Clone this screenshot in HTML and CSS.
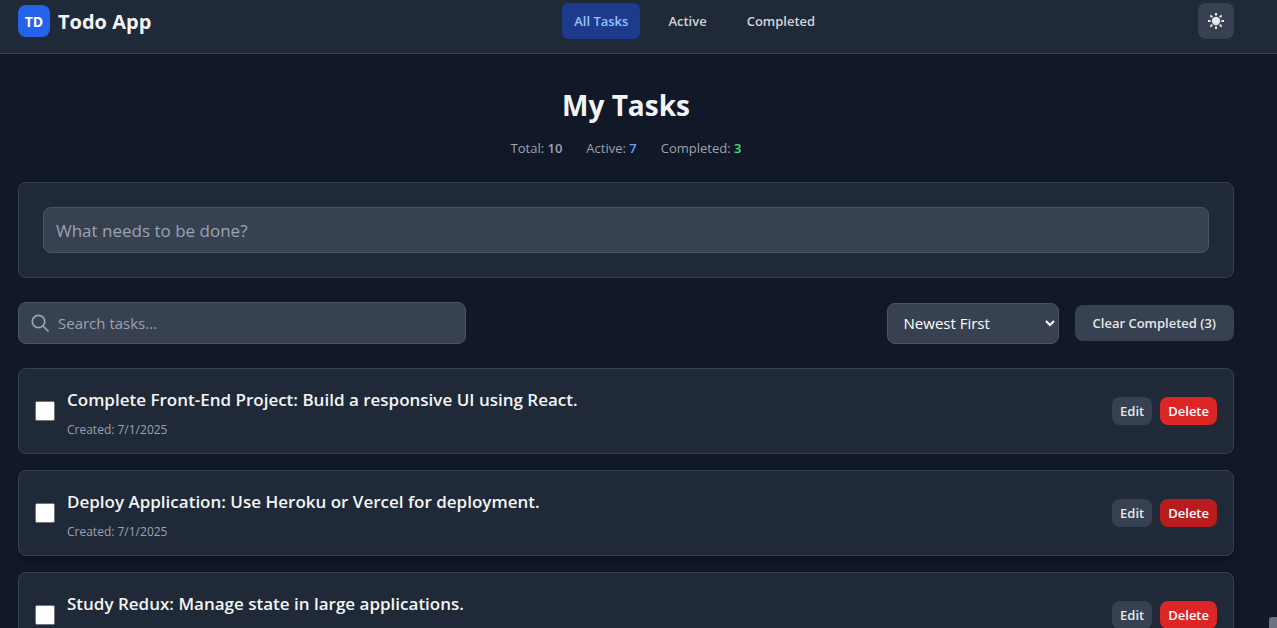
FILE: index.html
```html
<!DOCTYPE html>
<html lang="en">
<head>
<meta charset="utf-8">
<meta name="viewport" content="width=device-width, initial-scale=1">
<title>Todo App</title>
<link rel="stylesheet" href="styles.css">
</head>
<body>
<header class="topbar">
  <div class="brand">
    <span class="brand-mark">TD</span>
    <span class="brand-name">Todo App</span>
  </div>
  <nav class="nav">
    <a class="nav-link active" href="#all">All Tasks</a>
    <a class="nav-link" href="#active">Active</a>
    <a class="nav-link" href="#completed">Completed</a>
  </nav>
  <button class="theme-toggle" type="button" aria-label="Toggle theme">
    <svg width="16" height="16" viewBox="0 0 16 16" fill="currentColor" aria-hidden="true">
      <circle cx="8" cy="8" r="4.200"/>
      <g stroke="currentColor" stroke-width="2">
        <path d="M8 0v2.600M8 13.400V16M0 8h2.600M13.400 8H16"/>
        <path d="M2.400 2.400l1.800 1.800M11.800 11.800l1.800 1.800M2.400 13.600l1.800-1.800M11.800 4.200l1.800-1.800"/>
      </g>
    </svg>
  </button>
</header>

<main class="page">
  <section class="intro">
    <h1 class="title">My Tasks</h1>
    <div class="stats">
      <span>Total: <b>10</b></span>
      <span>Active: <b class="blue">7</b></span>
      <span>Completed: <b class="green">3</b></span>
    </div>
  </section>

  <form class="card composer">
    <input class="field new-task" type="text" placeholder="What needs to be done?" aria-label="New task">
  </form>

  <div class="toolbar">
    <label class="field search">
      <svg width="20" height="20" viewBox="0 0 20 20" fill="none" stroke="currentColor" stroke-width="1.700" stroke-linecap="round" aria-hidden="true">
        <circle cx="8.500" cy="8.500" r="6.200"/>
        <path d="M13 13l5 5"/>
      </svg>
      <input class="search-input" type="text" placeholder="Search tasks..." aria-label="Search tasks">
    </label>
    <div class="toolbar-actions">
      <select class="field sort" aria-label="Sort tasks">
        <option>Newest First</option>
        <option>Oldest First</option>
      </select>
      <button class="button clear" type="button">Clear Completed (3)</button>
    </div>
  </div>

  <ul class="tasks">
    <li class="card task">
      <input class="check" type="checkbox" id="task-1">
      <div class="task-body">
        <label class="task-title" for="task-1">Complete Front-End Project: Build a responsive UI using React.</label>
        <span class="task-date">Created: 7/1/2025</span>
      </div>
      <div class="task-actions">
        <button class="button small" type="button">Edit</button>
        <button class="button small danger" type="button">Delete</button>
      </div>
    </li>
    <li class="card task raised">
      <input class="check" type="checkbox" id="task-2">
      <div class="task-body">
        <label class="task-title" for="task-2">Deploy Application: Use Heroku or Vercel for deployment.</label>
        <span class="task-date">Created: 7/1/2025</span>
      </div>
      <div class="task-actions">
        <button class="button small" type="button">Edit</button>
        <button class="button small danger pressed" type="button">Delete</button>
      </div>
    </li>
    <li class="card task">
      <input class="check" type="checkbox" id="task-3">
      <div class="task-body">
        <label class="task-title" for="task-3">Study Redux: Manage state in large applications.</label>
        <span class="task-date">Created: 7/1/2025</span>
      </div>
      <div class="task-actions">
        <button class="button small" type="button">Edit</button>
        <button class="button small danger" type="button">Delete</button>
      </div>
    </li>
  </ul>
</main>
<div class="corner-tab" aria-hidden="true"></div>
</body>
</html>
```
FILE: styles.css
```css
* { box-sizing: border-box; }

html { scrollbar-width: none; }

body {
  margin: 0;
  background: #111827;
  color: #f3f4f6;
  font-family: "Open Sans", "Noto Sans", sans-serif;
  font-size: 15px;
}

input, select, button { font: inherit; color: inherit; }

.topbar {
  display: flex;
  align-items: center;
  justify-content: space-between;
  padding: 3px 43px 14px 18px;
  background: #1f2937;
  border-bottom: 1px solid #374151;
  box-shadow: 0 1px 3px rgba(0, 0, 0, 0.3);
}

.brand { display: flex; align-items: center; gap: 8px; }

.brand-mark {
  display: grid;
  place-items: center;
  width: 32px;
  height: 32px;
  border-radius: 8px;
  background: #2563eb;
  color: #fff;
  font-size: 14px;
  font-weight: 700;
}

.brand-name { padding-top: 2px; font-size: 20px; font-weight: 700; line-height: 28px; }

.nav { display: flex; gap: 16px; margin-left: 40px; }

.nav-link {
  padding: 8px 12px;
  border-radius: 6px;
  color: #d1d5db;
  font-size: 13px;
  font-weight: 600;
  line-height: 20px;
  text-decoration: none;
}

.nav-link.active { background: #1e3a8a; color: #93c5fd; }

.theme-toggle {
  display: grid;
  place-items: center;
  width: 36px;
  height: 36px;
  padding: 0;
  border: 0;
  border-radius: 8px;
  background: #374151;
  color: #e5e7eb;
}

.page { padding: 32px 43px 32px 18px; }

.intro { text-align: center; }

.title { margin: 0 0 14px; font-size: 28px; font-weight: 700; line-height: 38px; }

.stats {
  display: flex;
  justify-content: center;
  gap: 24px;
  color: #9ca3af;
  font-size: 13px;
  line-height: 20px;
}

.stats b { font-weight: 600; }
.stats .blue { color: #60a5fa; }
.stats .green { color: #4ade80; }

.card {
  background: #1f2937;
  border: 1px solid #374151;
  border-radius: 8px;
}

.composer { margin: 24px 0; padding: 24px; }

.field {
  background: #374151;
  border: 1px solid #4b5563;
  border-radius: 8px;
}

.field::placeholder, .search-input::placeholder { color: #9ca3af; opacity: 1; }

.new-task {
  display: block;
  width: 100%;
  height: 46px;
  padding: 0 12px;
  font-size: 17px;
}

.toolbar {
  display: flex;
  align-items: center;
  justify-content: space-between;
  gap: 16px;
  margin-bottom: 24px;
}

.search {
  display: flex;
  align-items: center;
  gap: 8px;
  flex: 0 1 448px;
  height: 42px;
  padding: 0 11px;
  color: #9ca3af;
}

.search-input {
  flex: 1;
  min-width: 0;
  padding: 0;
  border: 0;
  outline: 0;
  background: transparent;
}

.toolbar-actions { display: flex; align-items: center; gap: 16px; }

.sort { width: 172px; height: 41px; padding: 0 12px; color: #fff; }

.button {
  border: 0;
  border-radius: 8px;
  background: #374151;
  color: #e5e7eb;
  font-size: 13px;
  font-weight: 600;
  line-height: 20px;
  white-space: nowrap;
}

.clear { padding: 8px 18px; }

.tasks {
  display: flex;
  flex-direction: column;
  gap: 16px;
  margin: 0;
  padding: 0;
  list-style: none;
}

.task { display: flex; align-items: center; gap: 12px; padding: 15px 16px; }

.raised { box-shadow: 0 4px 6px rgba(0, 0, 0, 0.2); }

.check {
  appearance: none;
  flex: none;
  width: 20px;
  height: 20px;
  margin: 0;
  border: 1px solid #767676;
  border-radius: 2px;
  background: #fff;
}

.check:checked { background: #2563eb; }

.task-body {
  display: flex;
  flex: 1;
  flex-direction: column;
  gap: 8px;
  min-width: 0;
  padding-top: 2px;
}

.task-title { font-size: 17px; font-weight: 600; line-height: 28px; }

.task-date { color: #9ca3af; font-size: 12px; line-height: 16px; }

.task-actions { display: flex; gap: 8px; }

.small { padding: 4px 8px; }

.danger { background: #dc2626; color: #fff; }

.pressed { background: #b91c1c; }

.corner-tab {
  position: fixed;
  right: 0;
  bottom: 0;
  width: 8px;
  height: 11px;
  border-radius: 3px 0 0 0;
  background: #6b7280;
}
```
